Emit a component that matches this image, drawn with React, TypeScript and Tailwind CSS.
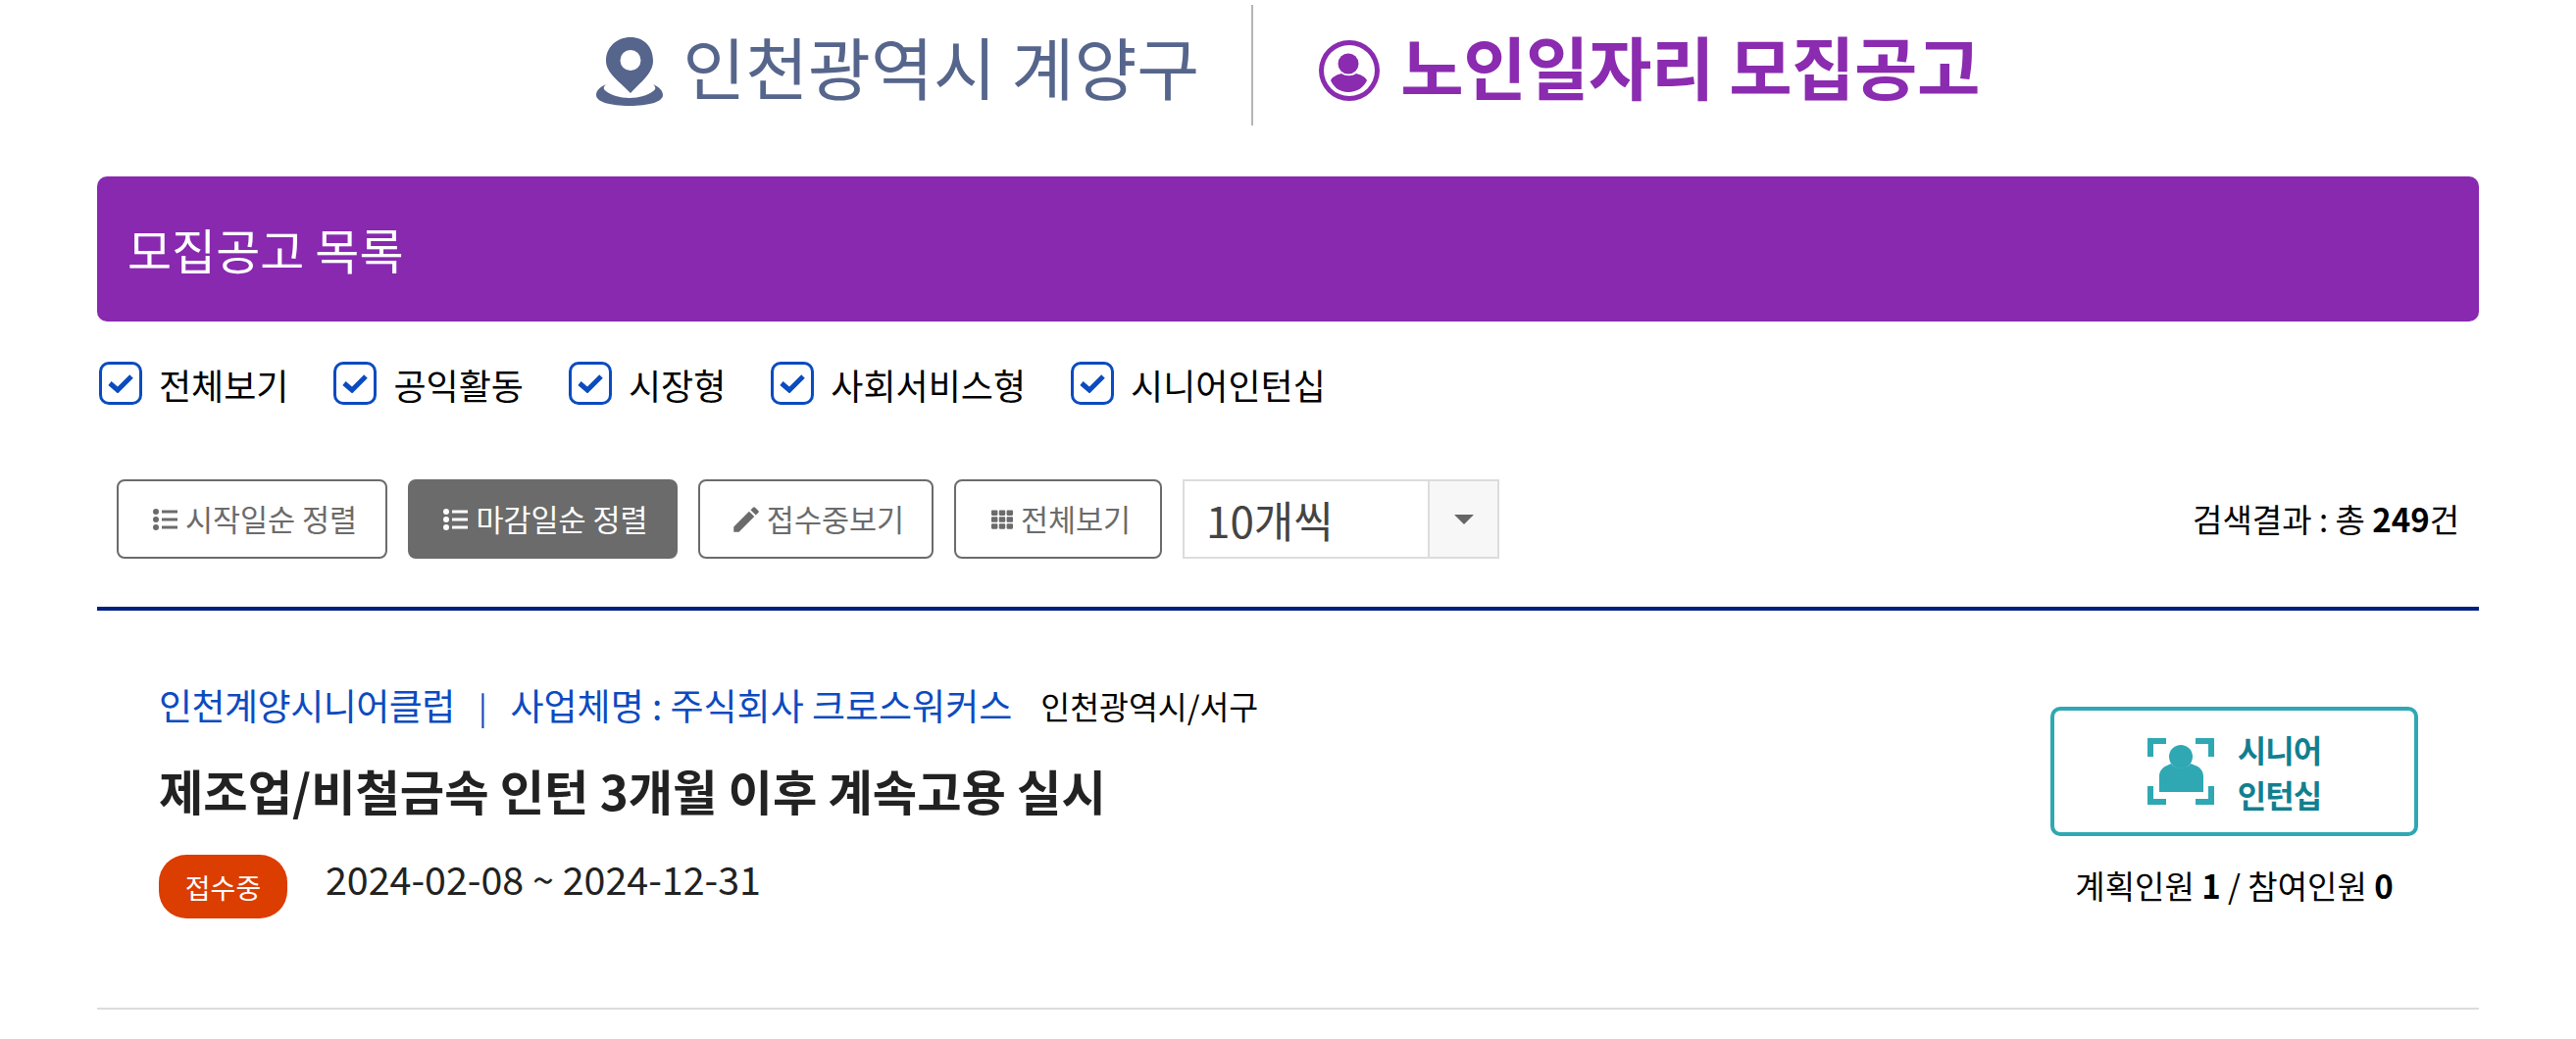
import React from "react";
import { FaTh } from "react-icons/fa";
import { MdEdit } from "react-icons/md";

const filters = ["전체보기", "공익활동", "시장형", "사회서비스형", "시니어인턴십"];

function PinIcon() {
  return (
    <svg viewBox="0 0 68 70" className="w-[68px] h-[70px] mr-[20px] mt-[12px]" fill="#56658b">
      <path
        fillRule="evenodd"
        d="M35 0C21 0 10 10 10 24c0 13 15 22 25 33 10-11 23-20 23-33C58 10 49 0 35 0zm0 13a10.500 10.500 0 1 1 0 21 10.500 10.500 0 0 1 0-21z"
      />
      <path d="M10 48C3 51 0 55 0 59c0 7 15 11 34 11s34-4 34-11c0-4-3-8-10-11 3 3 3 5 0 7-5 4-14 7-24 7s-19-3-24-7c-3-2-3-4 0-7z" />
    </svg>
  );
}

function PersonCircleIcon() {
  return (
    <svg viewBox="0 0 62 62" className="w-[62px] h-[62px] mr-[21px] mt-[10px]" fill="#8a2bb0">
      <path
        fillRule="evenodd"
        d="M31 0a31 31 0 1 0 0 62 31 31 0 0 0 0-62zm0 5a26 26 0 1 1 0 52 26 26 0 0 1 0-52z"
      />
      <circle cx="30" cy="24" r="10.500" />
      <path d="M12 41c2-4 7-6 11-7 4 3 11 3 15 0 4 1 9 3 11 7-3 7-10 12-19 12s-15-5-18-12z" />
    </svg>
  );
}

function ScanPersonIcon() {
  return (
    <svg viewBox="0 0 68 68" className="w-[68px] h-[68px]" fill="#2fa8b3">
      <path d="M0 0h19v6H6v13H0zM49 0h19v19h-6V6H49zM0 49h6v13h13v6H0zM62 49h6v19H49v-6h13z" />
      <circle cx="34" cy="19" r="12" />
      <path d="M12 55V39c0-5 3-9 8-11l4-2c5 6 15 6 20 0l5 2c5 2 8 6 8 11v16z" />
    </svg>
  );
}

function ListIcon() {
  return (
    <svg viewBox="0 0 25 22" className="w-[25px] h-[22px]" fill="currentColor">
      <circle cx="3" cy="3" r="3" />
      <circle cx="3" cy="11" r="3" />
      <circle cx="3" cy="19" r="3" />
      <rect x="9" y="1.500" width="16" height="3" />
      <rect x="9" y="9.500" width="16" height="3" />
      <rect x="9" y="17.500" width="16" height="3" />
    </svg>
  );
}

function CheckIcon() {
  return (
    <svg viewBox="0 0 26 20" className="w-[26px] h-[20px]" fill="none" stroke="#0b4bc0" strokeWidth="5">
      <path d="M2 10l8 7L24 3" />
    </svg>
  );
}

function SortButton({
  icon,
  label,
  className,
  active,
}: {
  icon: React.ReactNode;
  label: string;
  className: string;
  active?: boolean;
}) {
  return (
    <button
      className={`${className} h-[81px] flex items-center justify-center gap-[8px] rounded-[8px] border-2 border-[#6b6b6b] text-[30.500px] ${
        active ? "bg-[#6b6b6b] text-white" : "bg-white text-[#6b6b6b]"
      }`}
    >
      {icon}
      {label}
    </button>
  );
}

export default function App() {
  return (
    <div className="bg-white w-full h-[1060px] overflow-hidden font-['Noto_Sans_CJK_KR','Noto_Sans',sans-serif] text-[#111]">
      <header className="h-[180px] flex justify-center pt-[5px]">
        <div className="flex items-center h-[123px]">
          <PinIcon />
          <span className="text-[69.500px] leading-none text-[#56658b]">인천광역시 계양구</span>
          <div className="w-[2px] h-[123px] bg-[#b5b5b5] ml-[53px] mr-[67px]" />
          <PersonCircleIcon />
          <span className="text-[70px] leading-none font-bold text-[#8a2bb0] tracking-[-0.5px]">
            노인일자리 모집공고
          </span>
        </div>
      </header>

      <div className="mx-[99px]">
        <div className="h-[148px] bg-[#8829b0] rounded-[10px] flex items-center px-[31px] text-[49px] text-white">
          모집공고 목록
        </div>

        <div className="flex h-[46px] mt-[40px] pl-[2px] gap-[46px]">
          {filters.map((f) => (
            <label key={f} className="flex items-center gap-[17px] text-[36px] text-black">
              <span className="w-[44px] h-[44px] rounded-[10px] border-[3px] border-[#0b4bc0] flex items-center justify-center">
                <CheckIcon />
              </span>
              <span className="pt-[2px]">{f}</span>
            </label>
          ))}
        </div>

        <div className="flex items-center h-[81px] mt-[75px] pl-[20px] pr-[20px]">
          <div className="flex gap-[21px] items-center">
            <SortButton className="w-[276px] pl-[6px]" label="시작일순 정렬" icon={<ListIcon />} />
            <SortButton className="w-[275px] pl-[6px]" label="마감일순 정렬" active icon={<ListIcon />} />
            <SortButton
              className="w-[240px] pl-[2px]"
              label="접수중보기"
              icon={<MdEdit className="text-[34px] -mr-[4px]" />}
            />
            <SortButton
              className="w-[212px] pl-[6px]"
              label="전체보기"
              icon={<FaTh className="text-[22px]" />}
            />
            <div className="w-[323px] h-[81px] border-2 border-[#dcdcdc] flex">
              <div className="flex-1 flex items-center pl-[22px] text-[44px] text-[#444]">
                10개씩
              </div>
              <div className="w-[71px] bg-[#f7f7f7] border-l-2 border-[#dcdcdc] flex items-center justify-center">
                <span className="w-0 h-0 border-x-[10px] border-x-transparent border-t-[10px] border-t-[#666]" />
              </div>
            </div>
          </div>
          <div className="ml-auto text-[33px] text-black">
            검색결과 : 총 <b>249</b>건
          </div>
        </div>

        <div className="h-[4px] bg-[#002080] mt-[49px]" />

        <div className="flex justify-between h-[407px] border-b-2 border-[#dcdcdc] pl-[63px] pr-[62px]">
          <div className="pt-[70px]">
            <div className="flex items-center h-[54px] text-[37px] text-[#0b4bc0] whitespace-pre">
              <span className="tracking-[-0.5px]">인천계양시니어클럽</span>
              <span className="mx-[24px] text-[32px]">|</span>
              <span>사업체명 : 주식회사 크로스워커스</span>
              <span className="ml-[29px] text-[32.500px] text-black">인천광역시/서구</span>
            </div>
            <h2 className="mt-[24px] text-[49.300px] leading-[70px] font-bold text-[#222]">
              제조업/비철금속 인턴 3개월 이후 계속고용 실시
            </h2>
            <div className="mt-[25px] flex items-center">
              <span className="w-[131px] h-[65px] rounded-[28px] bg-[#dc3d00] text-white text-[28px] flex items-center justify-center">
                접수중
              </span>
              <span className="ml-[39px] mb-[18px] text-[39.400px] text-[#222]">2024-02-08 ~ 2024-12-31</span>
            </div>
          </div>

          <div className="w-[375px] pt-[98px] flex flex-col items-center">
            <div className="w-[375px] h-[132px] border-4 border-[#2fa8b3] rounded-[10px] flex items-center justify-center gap-[24px]">
              <ScanPersonIcon />
              <div className="text-[#127f8f] font-bold text-[32px] leading-[46px] tracking-[-1px]">
                시니어
                <br />
                인턴십
              </div>
            </div>
            <div className="mt-[26px] text-[33px] text-black whitespace-pre">
              계획인원 <b>1</b> / 참여인원 <b>0</b>
            </div>
          </div>
        </div>
      </div>
    </div>
  );
}
